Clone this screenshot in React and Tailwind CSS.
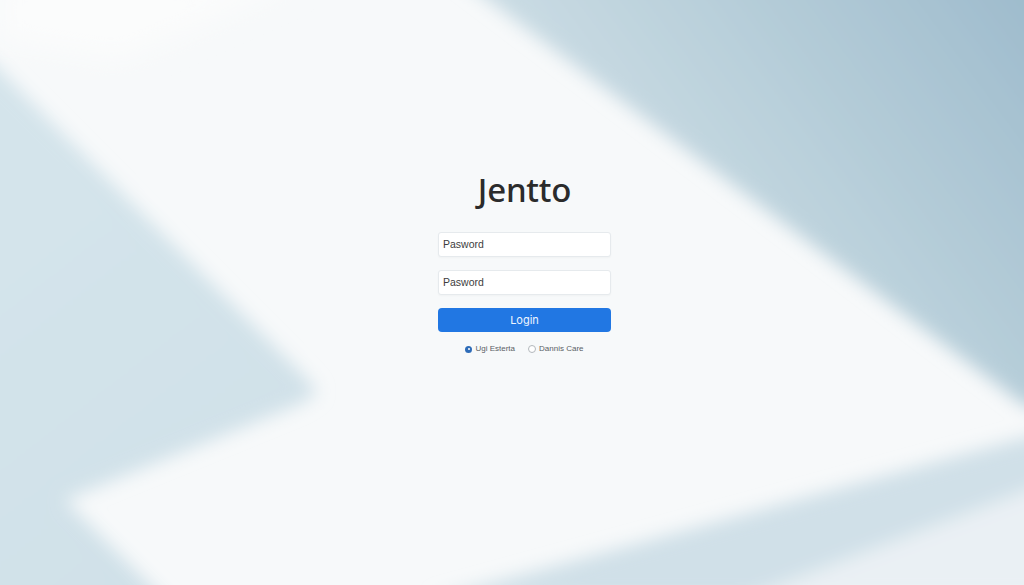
import React from 'react';

const Background = () => (
  <svg className="absolute inset-0 w-full h-full" viewBox="0 0 1024 585" preserveAspectRatio="none">
    <defs>
      <filter id="soft" x="-20%" y="-20%" width="140%" height="140%">
        <feGaussianBlur stdDeviation="9" />
      </filter>
      <filter id="softer" x="-20%" y="-20%" width="140%" height="140%">
        <feGaussianBlur stdDeviation="14" />
      </filter>
      <linearGradient id="topRight" x1="620" y1="300" x2="1024" y2="0" gradientUnits="userSpaceOnUse">
        <stop offset="0" stopColor="#d2e1e8" />
        <stop offset="0.5" stopColor="#b8cfda" />
        <stop offset="1" stopColor="#9fbccd" />
      </linearGradient>
      <linearGradient id="leftSide" x1="0" y1="200" x2="300" y2="585" gradientUnits="userSpaceOnUse">
        <stop offset="0" stopColor="#d4e4eb" />
        <stop offset="1" stopColor="#cfe0e8" />
      </linearGradient>
    </defs>
    <rect width="1024" height="585" fill="#f7f9fa" />
    <g filter="url(#soft)">
      <polygon points="435,-40 1080,-40 1080,420 1024,405" fill="url(#topRight)" />
      <polygon points="-40,30 300,372 318,392 300,404 65,500 190,625 -40,625" fill="url(#leftSide)" />
      <polygon points="430,600 1060,428 1060,478 740,600" fill="#d0e0e8" />
      <polygon points="740,600 1060,478 1060,600" fill="#eaf0f4" />
    </g>
    <g filter="url(#softer)">
      <polygon points="0,-20 300,-20 120,60 0,40" fill="#fbfcfc" />
    </g>
  </svg>
);

const App = () => {
  return (
    <div className="relative w-full h-[585px] overflow-hidden bg-[#f7f9fa]" style={{ fontFamily: 'Inter, "Liberation Sans", sans-serif' }}>
      <Background />

      {/* Login form */}
      <div className="relative flex justify-center pl-[25px] pt-[170px]">
        <div className="w-[173px] flex flex-col items-stretch">
          <h1 className="text-[33px] leading-[40px] font-medium text-[#2b2b2b] text-center tracking-[-0.2px]" style={{ fontFamily: '"Noto Sans", Inter, sans-serif' }}>Jentto</h1>

          <div className="mt-[22px] h-[25px] bg-white rounded-[3px] border border-[#e6eaed] shadow-[0_1px_2px_rgba(0,0,0,0.03)] flex items-center pl-[4px]">
            <span className="text-[10.5px] text-[#3d3d3d]" style={{ fontFamily: '"Liberation Sans", Arial, sans-serif' }}>Pasword</span>
          </div>

          <div className="mt-[13px] h-[25px] bg-white rounded-[3px] border border-[#e6eaed] shadow-[0_1px_2px_rgba(0,0,0,0.03)] flex items-center pl-[4px]">
            <span className="text-[10.5px] text-[#3d3d3d]" style={{ fontFamily: '"Liberation Sans", Arial, sans-serif' }}>Pasword</span>
          </div>

          <button className="mt-[13px] h-[24px] rounded-[4px] bg-[#2177e3] text-[#eef5ff] text-[11px] flex items-center justify-center">
            Login
          </button>

          <div className="mt-[11px] h-[12px] flex items-center justify-center gap-[13px] text-[8px] text-[#5a6065]" style={{ fontFamily: '"Liberation Sans", Arial, sans-serif' }}>
            <div className="flex items-center gap-[3px]">
              <span className="w-[7px] h-[7px] rounded-full bg-[#2e6cb8] flex items-center justify-center">
                <span className="w-[2px] h-[2px] rounded-full bg-white" />
              </span>
              <span>Ugi Esterta</span>
            </div>
            <div className="flex items-center gap-[3px]">
              <span className="w-[8px] h-[8px] rounded-full border border-[#b3b8bc] bg-white" />
              <span>Dannis Care</span>
            </div>
          </div>
        </div>
      </div>
    </div>
  );
};

export default App;
